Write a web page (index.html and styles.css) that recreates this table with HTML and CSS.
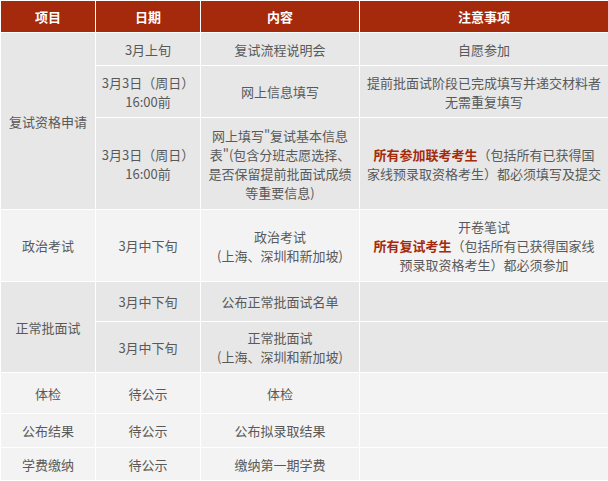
FILE: index.html
```html
<!DOCTYPE html>
<html lang="zh">
<head>
<meta charset="utf-8">
<link rel="stylesheet" href="styles.css">
</head>
<body>
<table class="sched">
  <colgroup>
    <col class="c1"><col class="c2"><col class="c3"><col class="c4">
  </colgroup>
  <thead>
    <tr class="h-head">
      <th>项目</th><th>日期</th><th>内容</th><th>注意事项</th>
    </tr>
  </thead>
  <tbody>
    <tr class="g-dark r1">
      <td rowspan="3">复试资格申请</td>
      <td>3月上旬</td>
      <td>复试流程说明会</td>
      <td>自愿参加</td>
    </tr>
    <tr class="g-dark r2">
      <td>3月3日（周日）<br>16:00前</td>
      <td>网上信息填写</td>
      <td>提前批面试阶段已完成填写并递交材料者<br>无需重复填写</td>
    </tr>
    <tr class="g-dark r3">
      <td>3月3日（周日）<br>16:00前</td>
      <td>网上填写"复试基本信息<br>表"(包含分班志愿选择、<br>是否保留提前批面试成绩<br>等重要信息)</td>
      <td><strong class="hl">所有参加联考考生</strong>（包括所有已获得国<br>家线预录取资格考生）都必须填写及提交</td>
    </tr>
    <tr class="g-light r4">
      <td>政治考试</td>
      <td>3月中下旬</td>
      <td>政治考试<br>(上海、深圳和新加坡)</td>
      <td>开卷笔试<br><strong class="hl">所有复试考生</strong>（包括所有已获得国家线<br>预录取资格考生）都必须参加</td>
    </tr>
    <tr class="g-dark r5">
      <td rowspan="2">正常批面试</td>
      <td>3月中下旬</td>
      <td>公布正常批面试名单</td>
      <td></td>
    </tr>
    <tr class="g-dark r6">
      <td>3月中下旬</td>
      <td>正常批面试<br>(上海、深圳和新加坡)</td>
      <td></td>
    </tr>
    <tr class="g-light r7">
      <td>体检</td>
      <td>待公示</td>
      <td>体检</td>
      <td></td>
    </tr>
    <tr class="g-light r8">
      <td>公布结果</td>
      <td>待公示</td>
      <td>公布拟录取结果</td>
      <td></td>
    </tr>
    <tr class="g-light r9">
      <td>学费缴纳</td>
      <td>待公示</td>
      <td>缴纳第一期学费</td>
      <td></td>
    </tr>
  </tbody>
</table>
</body>
</html>
```

FILE: styles.css
```css
html, body {
  margin: 0;
  padding: 0;
  background: #ffffff;
}

.sched {
  width: 608px;
  border-collapse: collapse;
  table-layout: fixed;
  font-family: "Microsoft YaHei", "Noto Sans CJK SC", "Noto Sans", sans-serif;
  font-size: 13px;
  line-height: 19px;
  color: #595959;
}

.c1 { width: 95px; }
.c2 { width: 105px; }
.c3 { width: 159px; }
.c4 { width: 249px; }

.sched th,
.sched td {
  border: 1px solid #ffffff;
  padding: 0 3px;
  text-align: center;
  vertical-align: middle;
  white-space: nowrap;
}

.sched th {
  background: #a52a0b;
  color: #ffffff;
  font-weight: bold;
}

.h-head { height: 32px; }

.g-dark td { background: #e7e7e7; }
.g-light td { background: #f3f3f3; }

.r1 { height: 33px; }
.r2 { height: 52px; }
.r3 { height: 92px; }
.r4 { height: 72px; }
.r5 { height: 40px; }
.r6 { height: 51px; }
.r7 { height: 41px; }
.r8 { height: 34px; }
.r9 { height: 33px; }

.hl {
  color: #a52a0b;
  font-weight: bold;
}
```
